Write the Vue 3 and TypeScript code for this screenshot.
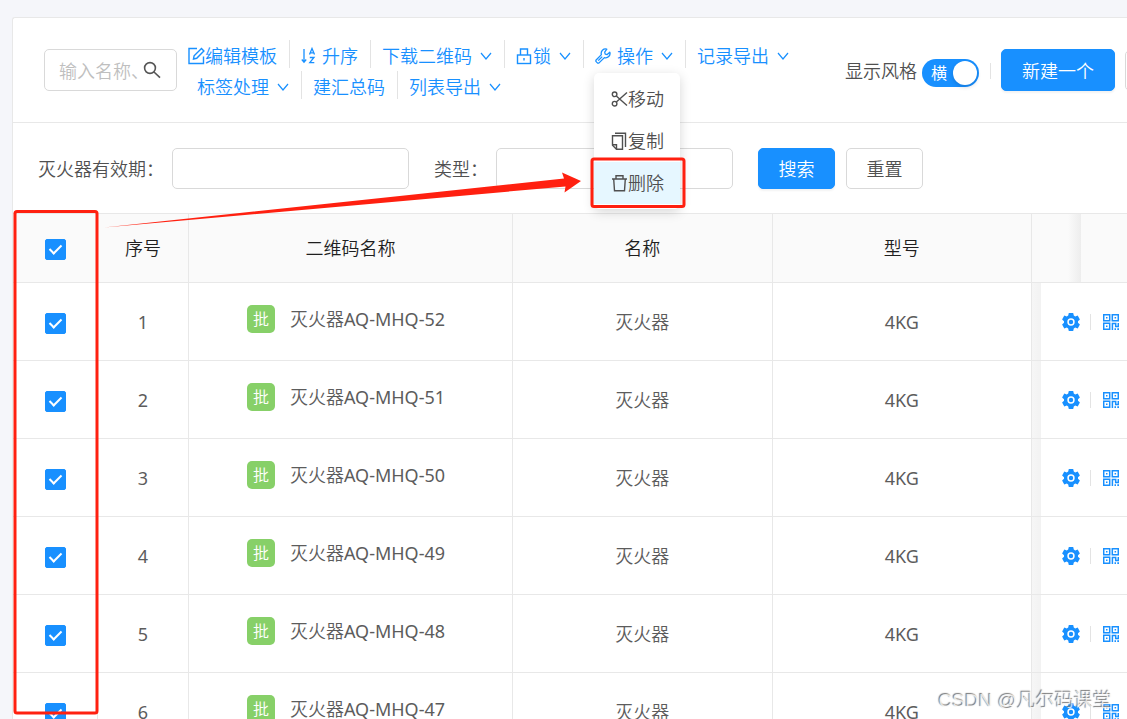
<script setup lang="ts">
import { ref } from 'vue'

interface Row {
  id: number
  code: string
  name: string
  model: string
  checked: boolean
}

const rows = ref<Row[]>(
  [52, 51, 50, 49, 48, 47].map((n, i) => ({
    id: i + 1,
    code: `灭火器AQ-MHQ-${n}`,
    name: '灭火器',
    model: '4KG',
    checked: true,
  })),
)
const allChecked = ref(true)
const horizontal = ref(true)

function toggleAll() {
  rows.value.forEach((r) => (r.checked = allChecked.value))
}
</script>

<template>
  <div class="page">
    <main class="card">
      <header class="toolbar">
        <div class="search">
          <input type="text" placeholder="输入名称、编号" aria-label="输入名称、编号" />
          <button type="button" class="search-btn" aria-label="搜索名称">
            <svg width="18" height="18" viewBox="0 0 18 18" fill="none" stroke="#555" stroke-width="1.6"><circle cx="7" cy="7" r="5.4" /><path d="M11 11l6 5.6" /></svg>
          </button>
        </div>

        <nav class="actions">
          <div class="line">
            <button type="button" class="act">
              <svg width="17" height="18" viewBox="0 0 17 18" fill="none" stroke="currentColor" stroke-width="1.4"><path d="M9 1.500H1v15h14.500V9.500" /><path d="M5.500 12l.6-3.200L13.500 1.500l2.400 2.400-7.200 7.400z" /></svg>编辑模板
            </button>
            <i class="sep"></i>
            <button type="button" class="act">
              <svg class="mr" width="15" height="18" viewBox="0 0 15 18" fill="none" stroke="currentColor" stroke-width="1.3"><path d="M3 2v13M.8 12.500L3 15.300l2.200-2.800" /><path d="M8.500 7.500l2.500-6 2.500 6M9.200 5.800h3.600M8.800 10.500h4.200l-4.200 5.200h4.500" /></svg>升序
            </button>
            <i class="sep"></i>
            <button type="button" class="act">下载二维码<svg class="chev" width="12" height="8" viewBox="0 0 12 8"><path d="M1 1l5 6 5-6" /></svg></button>
            <i class="sep"></i>
            <button type="button" class="act">
              <svg width="17" height="18" viewBox="0 0 17 18" fill="none" stroke="currentColor" stroke-width="1.4"><rect x="1.500" y="8" width="13" height="8.500" /><path d="M4.500 8V2h7v6M8 11v2.500" /></svg>锁<svg class="chev" width="12" height="8" viewBox="0 0 12 8"><path d="M1 1l5 6 5-6" /></svg>
            </button>
            <i class="sep"></i>
            <div class="dropdown">
              <button type="button" class="act" aria-haspopup="true" aria-expanded="true">
                <svg class="mr" width="16" height="18" viewBox="0 0 16 18" fill="none" stroke="currentColor" stroke-width="1.3" stroke-linejoin="round"><path d="M11.800 2.200a4.300 4.300 0 0 0-5.400 5.400L.9 13.200v1.200l1.700 1.700h1.200l5.600-5.500a4.300 4.300 0 0 0 5.400-5.400l-2.600 2.400-2-.4-.5-2z" /><path d="M3.200 13.600l4-4" /></svg>操作<svg class="chev" width="12" height="8" viewBox="0 0 12 8"><path d="M1 1l5 6 5-6" /></svg>
              </button>
              <div class="menu" role="menu">
                <button type="button" role="menuitem">
                  <svg width="17" height="18" viewBox="0 0 17 18" fill="none" stroke="currentColor" stroke-width="1.4"><circle cx="3.600" cy="4.300" r="2.300" /><circle cx="3.600" cy="13.700" r="2.300" /><path d="M5.300 5.900L16 15.500M5.300 12.100L16 2.500" /></svg>移动
                </button>
                <button type="button" role="menuitem">
                  <svg width="17" height="18" viewBox="0 0 17 18" fill="none" stroke="currentColor" stroke-width="1.4"><path d="M4 1.200h10.500V15" /><path d="M1.500 3.700h10v13.500h-6l-4-4z" /><path d="M1.500 12.700h4v4.500" /></svg>复制
                </button>
                <button type="button" role="menuitem" class="active">
                  <svg width="17" height="18" viewBox="0 0 17 18" fill="none" stroke="currentColor" stroke-width="1.4"><path d="M1 5h15M5 5V1.700h7V5M2.700 5l.8 11.700h10L14.300 5" /></svg>删除
                </button>
              </div>
            </div>
            <i class="sep"></i>
            <button type="button" class="act">记录导出<svg class="chev" width="12" height="8" viewBox="0 0 12 8"><path d="M1 1l5 6 5-6" /></svg></button>
          </div>
          <div class="line second">
            <button type="button" class="act">标签处理<svg class="chev" width="12" height="8" viewBox="0 0 12 8"><path d="M1 1l5 6 5-6" /></svg></button>
            <i class="sep"></i>
            <button type="button" class="act">建汇总码</button>
            <i class="sep"></i>
            <button type="button" class="act">列表导出<svg class="chev" width="12" height="8" viewBox="0 0 12 8"><path d="M1 1l5 6 5-6" /></svg></button>
          </div>
        </nav>

        <div class="right">
          <label class="style-label" for="style-switch">显示风格</label>
          <button id="style-switch" type="button" role="switch" class="switch" :class="{ off: !horizontal }" :aria-checked="horizontal" @click="horizontal = !horizontal">
            <span>横</span><i class="knob"></i>
          </button>
          <i class="sep small"></i>
          <button type="button" class="btn primary create">新建一个</button>
          <button type="button" class="btn more" aria-label="更多"></button>
        </div>
      </header>

      <form class="filters" @submit.prevent>
        <label for="expiry">灭火器有效期：</label>
        <input id="expiry" type="text" class="field" />
        <label for="kind" class="kind">类型：</label>
        <input id="kind" type="text" class="field" />
        <button type="submit" class="btn primary find">搜索</button>
        <button type="reset" class="btn">重置</button>
      </form>

      <table>
        <colgroup>
          <col class="c-check" /><col class="c-no" /><col class="c-code" /><col /><col /><col class="c-ops" />
        </colgroup>
        <thead>
          <tr>
            <th><input v-model="allChecked" type="checkbox" aria-label="全选" @change="toggleAll" /></th>
            <th>序号</th>
            <th>二维码名称</th>
            <th>名称</th>
            <th>型号</th>
            <th class="ops-head"></th>
          </tr>
        </thead>
        <tbody>
          <tr v-for="r in rows" :key="r.id">
            <td><input v-model="r.checked" type="checkbox" :aria-label="r.code" /></td>
            <td>{{ r.id }}</td>
            <td>
              <div class="code"><span class="tag">批</span>{{ r.code }}</div>
            </td>
            <td>{{ r.name }}</td>
            <td>{{ r.model }}</td>
            <td class="ops">
              <div class="ops-inner">
                <button type="button" aria-label="设置">
                  <svg width="18" height="18" viewBox="0 0 18 18"><path fill="#1890ff" fill-rule="evenodd" d="M6.800 0h4.400l.6 2.600 1.400.8 2.500-.8 2.200 3.800-1.900 1.800v1.600l1.900 1.800-2.200 3.800-2.500-.8-1.400.8-.6 2.600H6.800l-.6-2.600-1.400-.8-2.500.8L.1 11.600 2 9.800V8.200L.1 6.400l2.200-3.800 2.500.8 1.400-.8zM9 5.300a3.700 3.700 0 1 0 0 7.400 3.700 3.700 0 0 0 0-7.400zm0 1.500a2.200 2.200 0 1 1 0 4.400 2.200 2.200 0 0 1 0-4.400z" /></svg>
                </button>
                <i class="sep small"></i>
                <button type="button" aria-label="二维码">
                  <svg width="16" height="16" viewBox="0 0 16 16" fill="none" stroke="#1890ff" stroke-width="1.500"><path d="M.7.7h6v6h-6zM9.300.7h6v6h-6zM.7 9.300h6v6h-6zM9.400 16V9.400h3.300v3h2.600V9" /><path fill="#1890ff" stroke="none" d="M3 3h1.500v1.500H3zM11.600 3h1.500v1.500h-1.500zM3 11.600h1.500v1.500H3zM11.500 14.300H13V16h-1.500zM14.300 14.300H16V16h-1.700z" /></svg>
                </button>
              </div>
            </td>
          </tr>
        </tbody>
      </table>
    </main>

    <svg class="marks" width="720" height="719" viewBox="0 0 720 719" fill="none" aria-hidden="true">
      <rect x="15" y="211.500" width="82" height="501.500" rx="2" stroke="#ff2010" stroke-width="3" />
      <rect x="592" y="159" width="92" height="47.500" rx="2" stroke="#ff2010" stroke-width="3" />
      <path d="M104 227.500L564 178.500l-2-6 19 8.500-16.500 11.500 1-6z" fill="#ff2010" />
    </svg>
    <div class="watermark">CSDN @凡尔码课堂</div>
  </div>
</template>

<style>
body {
  margin: 0;
}
</style>

<style scoped>
.page {
  position: relative;
  box-sizing: border-box;
  height: 100vh;
  padding: 17px 0 0 12px;
  overflow: hidden;
  background: #f5f6fa;
  color: #505050;
  font: 18px/28px "Noto Sans", "Noto Sans CJK SC", sans-serif;
  font-weight: 350;
}
button,
input {
  box-sizing: border-box;
  margin: 0;
  font: inherit;
  color: inherit;
}
button {
  padding: 0;
  border: 0;
  background: none;
  white-space: nowrap;
  cursor: pointer;
}
svg {
  flex: none;
}
.card {
  border: 1px solid #e8e8e8;
  border-right: 0;
  border-radius: 3px 0 0 0;
  background: #fff;
}
.toolbar {
  display: flex;
  align-items: flex-start;
  box-sizing: border-box;
  height: 105px;
  padding: 22px 0 0 31px;
  border-bottom: 1px solid #e8e8e8;
}
.search {
  display: flex;
  align-items: center;
  box-sizing: border-box;
  flex: none;
  width: 133px;
  height: 42px;
  margin-top: 9px;
  padding: 0 15px 0 14px;
  border: 1px solid #d9d9d9;
  border-radius: 5px;
}
.search input {
  flex: 1;
  min-width: 0;
  padding: 2px 0 0;
  border: 0;
  outline: 0;
  background: none;
}
.search input::placeholder {
  color: #bfbfbf;
}
.search-btn {
  display: flex;
  margin-left: 5px;
}
.actions {
  margin-left: 11px;
  color: #1890ff;
}
.line {
  display: flex;
  align-items: center;
  height: 31px;
}
.second {
  padding-left: 9px;
}
.act {
  display: flex;
  align-items: center;
}
.mr {
  margin-right: 6px;
}
.chev {
  margin-left: 8px;
  fill: none;
  stroke: currentColor;
  stroke-width: 1.2;
}
.sep {
  flex: none;
  width: 1px;
  height: 28px;
  margin: 0 11px 0 12px;
  background: #e3e3e3;
}
.small {
  height: 16px;
}
.line .sep {
  align-self: flex-start;
}
.dropdown {
  position: relative;
}
.menu {
  position: absolute;
  z-index: 2;
  top: 31px;
  left: -1px;
  padding: 5px 0;
  border-radius: 5px;
  background: #fff;
  box-shadow: 0 3px 12px rgba(0, 0, 0, 0.16);
  color: #505050;
}
.menu button {
  display: flex;
  align-items: center;
  width: 86px;
  height: 42px;
  padding-left: 17px;
}
.menu .active {
  background: #e6f7ff;
}
.right {
  display: flex;
  align-items: center;
  flex: none;
  height: 42px;
  margin: 9px -38px 0 auto;
}
.style-label {
  padding-top: 2px;
}
.switch {
  display: flex;
  align-items: center;
  justify-content: space-between;
  width: 57px;
  height: 28px;
  margin: 6px 0 0 5px;
  padding: 0 2px 0 9px;
  border-radius: 14px;
  background: #1890ff;
  color: #fff;
  font-size: 16px;
  font-weight: 400;
}
.off {
  flex-direction: row-reverse;
  background: #bfbfbf;
}
.knob {
  width: 24px;
  height: 24px;
  border-radius: 50%;
  background: #fff;
  box-shadow: 0 2px 4px rgba(0, 35, 80, 0.2);
}
.right .sep {
  margin: 2px 10px 0 11px;
}
.btn {
  min-width: 77px;
  height: 41px;
  padding: 2px 19px 0;
  border: 1px solid #d9d9d9;
  border-radius: 5px;
  background: #fff;
}
.primary {
  border-color: #1890ff;
  background: #1890ff;
  color: #fff;
  font-weight: 350;
  box-shadow: 0 2px 2px rgba(0, 0, 0, 0.05);
}
.create {
  height: 42px;
  padding: 2px 20px 0;
}
.more {
  min-width: 40px;
  margin-left: 10px;
}
.filters {
  display: flex;
  align-items: center;
  box-sizing: border-box;
  height: 90px;
  padding: 0 0 0 25px;
}
.filters label {
  padding-top: 2px;
  white-space: nowrap;
}
.field {
  flex: 0 1 237px;
  min-width: 0;
  height: 41px;
  margin-left: 8px;
  padding: 0 12px;
  border: 1px solid #d9d9d9;
  border-radius: 5px;
}
.filters .kind {
  margin-left: 25px;
}
.find {
  margin: 0 11px 0 25px;
}
table {
  width: 100%;
  border-spacing: 0;
  border-top: 1px solid #e8e8e8;
  table-layout: fixed;
}
.c-check {
  width: 85px;
}
.c-no {
  width: 91px;
}
.c-code {
  width: 324px;
}
.c-ops {
  width: 95px;
}
th,
td {
  box-sizing: border-box;
  height: 78px;
  padding: 0;
  border-right: 1px solid #e8e8e8;
  border-bottom: 1px solid #e8e8e8;
  text-align: center;
}
td {
  color: #5c5c5c;
  font-family: "Noto Sans", "Noto Sans CJK SC DemiLight", "Noto Sans CJK SC", sans-serif;
  font-weight: 400;
}
th {
  height: 69px;
  background: #fafafa;
  color: #1f1f1f;
  font-weight: 350;
}
.ops-head {
  border-right: 0;
  background: linear-gradient(90deg, #fafafa 36px, #ededed 49px, #fafafa 49px);
}
td.ops {
  border-right: 0;
  background: linear-gradient(90deg, #f6f6f6, #f2f2f2 9px, #fff 9px);
}
input[type="checkbox"] {
  display: block;
  width: 21px;
  height: 21px;
  margin: 3px auto 0;
  border: 1px solid #d9d9d9;
  border-radius: 2px;
  background: #fff;
  appearance: none;
}
input[type="checkbox"]:checked {
  border-color: #1890ff;
  background: #1890ff;
}
input[type="checkbox"]:checked::before {
  content: "";
  display: block;
  width: 5px;
  height: 10px;
  margin: 2px 0 0 6px;
  border: solid #fff;
  border-width: 0 2px 2px 0;
  transform: rotate(45deg);
}
.code {
  display: flex;
  align-items: center;
  justify-content: center;
  padding: 0 9px 6px 0;
}
.tag {
  width: 28px;
  height: 28px;
  margin-right: 15px;
  border-radius: 5px;
  background: #87d068;
  color: #fff;
  font-size: 16px;
  font-weight: 400;
  line-height: 28px;
}
.ops-inner {
  display: flex;
  align-items: center;
  padding-left: 30px;
}
.ops-inner button {
  display: flex;
}
.ops-inner .sep {
  margin: 0 12px 0 10px;
}
.marks {
  position: absolute;
  z-index: 3;
  top: 0;
  left: 0;
  pointer-events: none;
}
.watermark {
  position: absolute;
  z-index: 3;
  right: 15px;
  bottom: 4px;
  color: rgba(255, 255, 255, 0.75);
  font-family: "Liberation Sans", "Noto Sans CJK SC", sans-serif;
  font-size: 19px;
  text-shadow: -1px -1px 1px #777;
  white-space: nowrap;
}
</style>
